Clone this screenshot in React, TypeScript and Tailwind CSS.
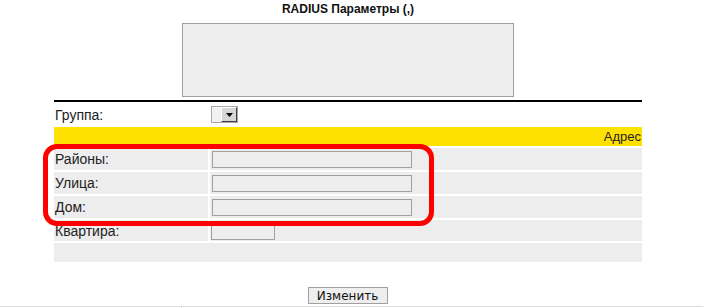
import React from "react";

const arial = { fontFamily: '"Liberation Sans", Arial, sans-serif' };

function Row({ label, children, h = "h-[22px]" }: { label: string; children?: React.ReactNode; h?: string }) {
  return (
    <div className={`flex gap-[2px] ${h}`}>
      <div className="w-[154px] bg-[#ededed] flex items-center pl-[1px] text-[14px] text-[#222] leading-none">{label}</div>
      <div className="flex-1 bg-[#ededed] flex items-center pl-[2px]">{children}</div>
    </div>
  );
}

export default function App() {
  return (
    <div className="relative w-[703px] h-[308px] bg-white overflow-hidden" style={arial}>
      <div className="ml-[54px] w-[588px]">
        <div className="h-[23px] pt-[2px] text-center font-bold text-[12px] leading-[14px] text-[#111]">
          RADIUS Параметры (,)
        </div>
        <div className="ml-[128px] w-[332px] h-[74px] border border-[#a0a0a0] bg-[#eeeeee]" />
        <div className="mt-[3px] h-[2px] bg-black" />
        <div className="h-[25px] flex items-center">
          <div className="w-[157px] pl-[1px] text-[14px] text-[#222] leading-none">Группа:</div>
          <div className="w-[27px] h-[17px] border border-[#a8a8a8] bg-[#f2f2f2] flex justify-end">
            <div className="w-[16px] h-full bg-[#d6d6d6] border-t border-l border-t-white border-l-white border-b border-r border-b-[#404040] border-r-[#404040] flex items-center justify-center">
              <svg width="7" height="4" viewBox="0 0 7 4">
                <path d="M0 0h7L3.5 4z" fill="#000" />
              </svg>
            </div>
          </div>
        </div>
        <div className="h-[19px] bg-[#ffe100] flex items-center justify-end pr-[1px] text-[13px] text-[#222] leading-none">
          Адрес
        </div>
        <div className="mt-[2px] flex flex-col gap-[2px]">
          <Row label="Районы:">
            <div className="w-[200px] h-[17px] border border-[#a0a0a0] bg-[#eeeeee]" />
          </Row>
          <Row label="Улица:">
            <div className="w-[200px] h-[17px] border border-[#a0a0a0] bg-[#eeeeee]" />
          </Row>
          <Row label="Дом:">
            <div className="w-[200px] h-[17px] border border-[#a0a0a0] bg-[#eeeeee]" />
          </Row>
          <Row label="Квартира:" h="h-[21px]">
            <div className="-ml-[1px] mt-[1px] w-[64px] h-[18px] border border-[#a0a0a0] bg-[#eeeeee]" />
          </Row>
          <div className="h-[19px] bg-[#ededed]" />
        </div>
        <div className="mt-[25px] flex justify-center">
          <div
            className="w-[80px] h-[17px] border border-[#a0a0a0] bg-[#eeeeee] flex items-center justify-center text-[12px] text-[#111] leading-none -ml-[1px]"
            style={{ fontFamily: '"DejaVu Sans", Verdana, sans-serif' }}
          >
            Изменить
          </div>
        </div>
      </div>
      <div className="mt-[2px] h-px bg-[#dddddd]" />
      <div className="ml-[181px] w-px h-[2px] bg-[#dddddd]" />
      <div className="absolute left-[43px] top-[144px] w-[391px] h-[82px] border-[5px] border-[#ff0000] rounded-[14px]" />
    </div>
  );
}
